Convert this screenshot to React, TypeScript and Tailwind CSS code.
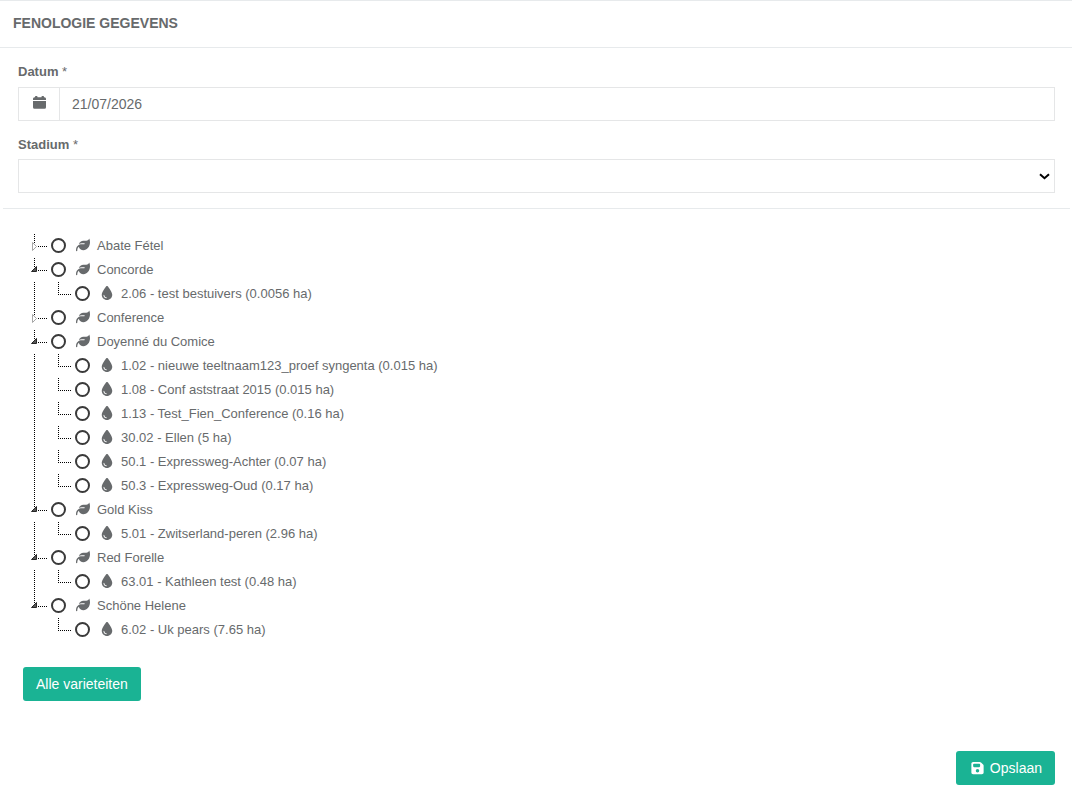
import { useState } from 'react';
import type { ReactNode } from 'react';
import { FaDroplet, FaFloppyDisk, FaLeaf } from 'react-icons/fa6';

type Variety = {
  name: string;
  open: boolean;
  plots: string[];
};

const initialVarieties: Variety[] = [
  { name: 'Abate Fétel', open: false, plots: [] },
  { name: 'Concorde', open: true, plots: ['2.06 - test bestuivers (0.0056 ha)'] },
  { name: 'Conference', open: false, plots: [] },
  {
    name: 'Doyenné du Comice',
    open: true,
    plots: [
      '1.02 - nieuwe teeltnaam123_proef syngenta (0.015 ha)',
      '1.08 - Conf aststraat 2015 (0.015 ha)',
      '1.13 - Test_Fien_Conference (0.16 ha)',
      '30.02 - Ellen (5 ha)',
      '50.1 - Expressweg-Achter (0.07 ha)',
      '50.3 - Expressweg-Oud (0.17 ha)',
    ],
  },
  { name: 'Gold Kiss', open: true, plots: ['5.01 - Zwitserland-peren (2.96 ha)'] },
  { name: 'Red Forelle', open: true, plots: ['63.01 - Kathleen test (0.48 ha)'] },
  { name: 'Schöne Helene', open: true, plots: ['6.02 - Uk pears (7.65 ha)'] },
];

function CalendarIcon() {
  return (
    <svg width="14" height="14" viewBox="0 0 14 14" fill="currentColor" aria-hidden="true">
      <path d="M3 2.3V1.8A.8.8 0 0 1 3.8 1H4.7A.8.8 0 0 1 5.5 1.8V2.3H9.5V1.8A.8.8 0 0 1 10.3 1H11.2A.8.8 0 0 1 12 1.8V2.3H12.5A1.5 1.5 0 0 1 14 3.8V5H1V3.8A1.5 1.5 0 0 1 2.5 2.3Z" />
      <path d="M1 6H14V12.3A1.5 1.5 0 0 1 12.5 13.8H2.5A1.5 1.5 0 0 1 1 12.3Z" />
    </svg>
  );
}

function ExpanderIcon({ open }: { open: boolean }) {
  return (
    <svg width="24" height="24" viewBox="0 0 24 24" fill="none" className="overflow-visible" aria-hidden="true">
      <path d="M12.5 1V13M16 13.5H25" stroke="#000" strokeDasharray="1 1" />
      {open ? (
        <path d="M9.5 14.5H14.5V9.5Z" fill="#595959" stroke="#262626" />
      ) : (
        <path d="M10.5 9.5V17.5L14.5 13.5Z" fill="#fff" stroke="#a6a6a6" />
      )}
    </svg>
  );
}

function VerticalLine() {
  return (
    <svg width="24" height="24" viewBox="0 0 24 24" fill="none" aria-hidden="true">
      <path d="M12.5 1V24" stroke="#000" strokeDasharray="1 1" />
    </svg>
  );
}

function CornerLine() {
  return (
    <svg width="24" height="24" viewBox="0 0 24 24" fill="none" className="overflow-visible" aria-hidden="true">
      <path d="M12.5 1V14M14 13.5H25" stroke="#000" strokeDasharray="1 1" />
    </svg>
  );
}

function NodeLabel({ text, icon }: { text: string; icon: ReactNode }) {
  return (
    <label className="flex items-center">
      <span className="flex w-6 justify-center">
        <input
          type="radio"
          name="node"
          value={text}
          className="size-[15px] appearance-none rounded-full border-2 border-[#3a3a3a] bg-white checked:bg-[#3a3a3a]"
        />
      </span>
      <span className="flex w-[26px] justify-center">{icon}</span>
      <span className="pt-[2px] pl-px">{text}</span>
    </label>
  );
}

export default function App() {
  const [varieties, setVarieties] = useState(initialVarieties);
  const [date, setDate] = useState('21/07/2026');

  function toggle(name: string) {
    setVarieties((items) => items.map((item) => (item.name === name ? { ...item, open: !item.open } : item)));
  }

  return (
    <form
      onSubmit={(event) => event.preventDefault()}
      className="border-t border-[#e7eaec] bg-white font-['Liberation_Sans',Arial,sans-serif] text-[13px] leading-5 text-[#676a6c]"
    >
      <header className="border-b border-[#e7eaec] px-[13px] pt-3 pb-[14px]">
        <h5 className="text-sm font-bold">FENOLOGIE GEGEVENS</h5>
      </header>

      <div className="pt-[14px] pr-[17px] pb-[15px] pl-[18px]">
        <label htmlFor="datum" className="block font-bold">
          Datum <span className="font-normal">*</span>
        </label>
        <div className="mt-[5px] flex h-[34px] border border-[#e5e6e7]">
          <span className="flex w-[41px] items-center justify-center border-r border-[#e5e6e7] pb-1">
            <CalendarIcon />
          </span>
          <input
            id="datum"
            type="text"
            value={date}
            onChange={(event) => setDate(event.target.value)}
            className="min-w-0 flex-1 px-3 text-sm outline-none"
          />
        </div>

        <label htmlFor="stadium" className="mt-[14px] block font-bold">
          Stadium <span className="font-normal">*</span>
        </label>
        <div className="mt-1 grid items-center">
          <select
            id="stadium"
            defaultValue=""
            className="col-start-1 row-start-1 h-[34px] w-full appearance-none border border-[#e5e6e7] bg-white px-3 text-sm"
          >
            <option value=""></option>
          </select>
          <svg
            width="11"
            height="7"
            viewBox="0 0 11 7"
            fill="none"
            className="pointer-events-none col-start-1 row-start-1 mr-[5px] justify-self-end"
            aria-hidden="true"
          >
            <path d="M1 1.2L5.5 5.2L10 1.2" stroke="#000" strokeWidth="2" />
          </svg>
        </div>
      </div>

      <hr className="mr-[2px] ml-[3px] border-[#e7eaec]" />

      <ul className="pt-6 pl-[22px]">
        {varieties.map((variety, index) => (
          <li key={variety.name}>
            <div className="flex h-6 items-center">
              <button type="button" aria-label={variety.name} aria-expanded={variety.open} onClick={() => toggle(variety.name)}>
                <ExpanderIcon open={variety.open} />
              </button>
              <NodeLabel text={variety.name} icon={<FaLeaf size={14} />} />
            </div>
            {variety.open ? (
              <ul>
                {variety.plots.map((plot) => (
                  <li key={plot} className="flex h-6 items-center">
                    {index < varieties.length - 1 ? <VerticalLine /> : <span className="w-6" />}
                    <CornerLine />
                    <NodeLabel text={plot} icon={<FaDroplet size={14} />} />
                  </li>
                ))}
              </ul>
            ) : null}
          </li>
        ))}
      </ul>

      <div className="px-[23px] pt-[26px]">
        <button type="button" className="h-[34px] rounded-[3px] bg-[#1ab394] px-[13px] text-sm text-white">
          Alle varieteiten
        </button>
      </div>

      <div className="flex justify-end px-[17px] pt-[50px] pb-[18px]">
        <button type="submit" className="flex h-[34px] items-center gap-1 rounded-[3px] bg-[#1ab394] px-[13px] text-sm text-white">
          <FaFloppyDisk size={14} className="w-[17px]" />
          Opslaan
        </button>
      </div>
    </form>
  );
}
